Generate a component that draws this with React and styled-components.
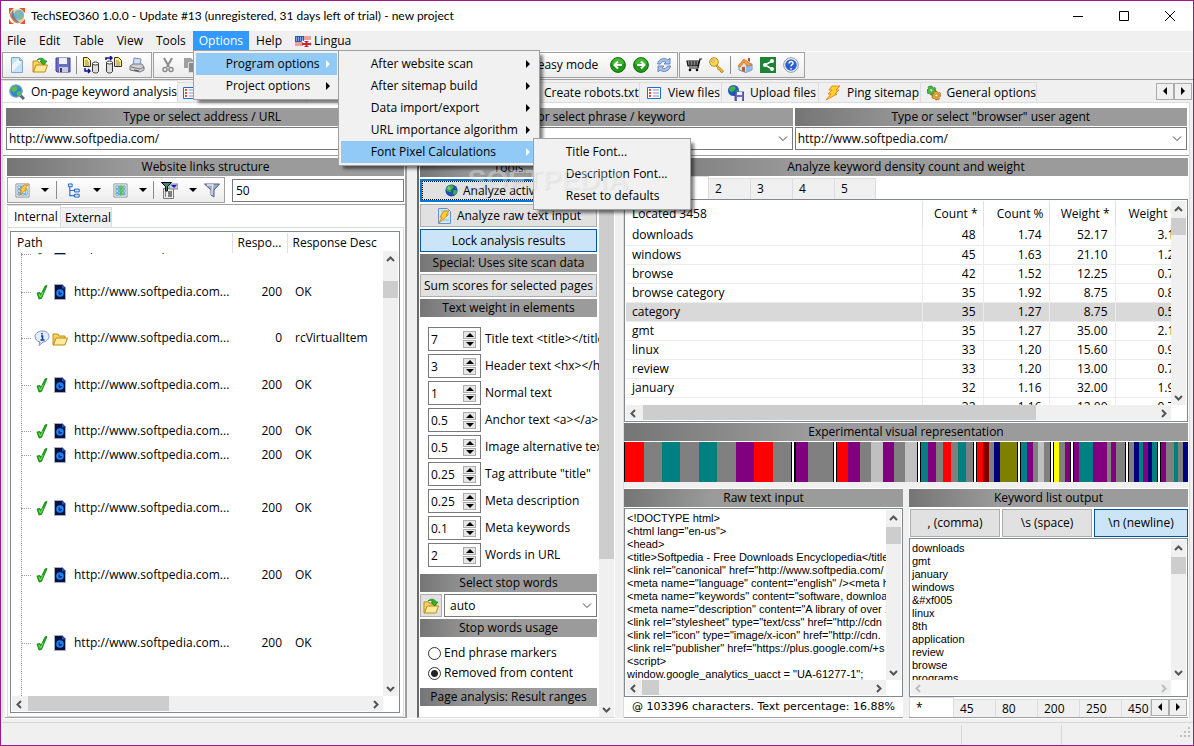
import styled, { createGlobalStyle, css } from 'styled-components'

const GlobalStyle = createGlobalStyle`
  * {
    box-sizing: border-box;
  }
  body {
    margin: 0;
    background: #f0f0f0;
    font-family: 'Open Sans', 'Noto Sans', sans-serif;
    font-size: 12px;
    line-height: 16px;
    color: #000;
  }
  button, input, select, textarea {
    font: inherit;
    color: inherit;
    margin: 0;
    border-radius: 0;
    outline: none;
  }
`

/* ---------- window ---------- */

const Window = styled.div`
  display: flex;
  flex-direction: column;
  height: 100vh;
  min-height: 620px;
  border: 1px solid #9a1a8c;
  background: #f0f0f0;
  overflow: hidden;
`

const TitleBar = styled.header`
  display: flex;
  align-items: center;
  height: 30px;
  flex: none;
  padding-left: 8px;
  background: #fff;
`

const Title = styled.h1`
  flex: 1;
  margin: 0 0 0 6px;
  font-family: Lato, 'Open Sans', sans-serif;
  font-size: 12px;
  font-weight: normal;
  white-space: nowrap;
`

const CaptionButton = styled.button`
  display: flex;
  align-items: center;
  justify-content: center;
  width: 46px;
  height: 29px;
  padding: 0;
  border: 0;
  background: transparent;
`

/* ---------- menus ---------- */

const MenuBar = styled.nav`
  display: flex;
  align-items: flex-start;
  gap: 1px;
  height: 20px;
  flex: none;
`

const MenuItem = styled.div`
  position: relative;
`

const MenuButton = styled.button`
  display: flex;
  align-items: center;
  gap: 3px;
  height: 19px;
  padding: 0 6px;
  border: 0;
  background: ${(props) => (props.$open ? '#3399ff' : 'transparent')};
  color: ${(props) => (props.$open ? '#fff' : '#000')};
`

const Popup = styled.div`
  position: absolute;
  z-index: 10;
  top: ${(props) => props.$top || '100%'};
  left: ${(props) => props.$left || '0'};
  width: ${(props) => props.$width};
  padding: 2px;
  background: #f1f1f1;
  border: 1px solid #a0a0a0;
  box-shadow: 4px 4px 3px -1px rgba(0, 0, 0, 0.5);
`

const PopupButton = styled.button`
  display: flex;
  align-items: center;
  justify-content: space-between;
  width: 100%;
  height: 22px;
  padding: 0 5px 0 30px;
  border: 0;
  white-space: nowrap;
  text-align: left;
  background: ${(props) => (props.$active ? '#91c9f7' : 'transparent')};
  svg {
    fill: ${(props) => (props.$active ? '#fff' : '#000')};
  }
`

const Watermark = styled.div`
  position: absolute;
  z-index: 11;
  top: 24px;
  left: -66px;
  font: bold 28px/34px 'Liberation Sans', Arial, sans-serif;
  color: rgba(255, 255, 255, 0.35);
  text-shadow: 1px 1px 2px rgba(0, 0, 0, 0.08);
  pointer-events: none;
`

/* ---------- toolbars ---------- */

const ToolBar = styled.div`
  display: flex;
  gap: 1px;
  flex: none;
  height: 29px;
  padding-left: 1px;
  border-top: 1px solid #fff;
  border-bottom: 1px solid #a0a0a0;
`

const ToolGroup = styled.div`
  display: flex;
  align-items: center;
  width: ${(props) => props.$width};
  height: 26px;
  padding: 0 2px;
  border: 1px solid #a0a0a0;
  background: linear-gradient(#fff, #ececec);
  white-space: nowrap;
`

const ToolButton = styled.button`
  display: flex;
  align-items: center;
  justify-content: center;
  gap: 11px;
  width: ${(props) => props.$width || '23px'};
  height: 22px;
  padding: 0;
  border: 0;
  background: transparent;
`

const ToolSeparator = styled.span`
  width: 1px;
  height: 18px;
  margin: 0 2px;
  background: #8c8c8c;
`

const Spacer = styled.span`
  flex: 1;
`

/* ---------- tabs ---------- */

const TabRow = styled.div`
  display: flex;
  align-items: flex-end;
  flex: none;
  height: ${(props) => props.$height || '22px'};
  padding-left: ${(props) => props.$pad || '0'};
`

const Tab = styled.button`
  display: flex;
  align-items: center;
  gap: 6px;
  flex: none;
  width: ${(props) => props.$width};
  height: ${(props) => (props.$active ? '100%' : 'calc(100% - 2px)')};
  padding: 0 0 0 ${(props) => props.$pad || '6px'};
  border: 1px solid #dcdcdc;
  border-left-width: ${(props) => (props.$active ? '1px' : '0')};
  border-bottom: 0;
  background: ${(props) => (props.$active ? '#fff' : '#f0f0f0')};
  overflow: hidden;
  white-space: nowrap;
`

const ArrowPair = styled.div`
  display: flex;
  align-self: center;
  margin-left: auto;
  margin-right: 1px;
`

const ArrowButton = styled.button`
  display: flex;
  align-items: center;
  justify-content: center;
  width: 18px;
  height: 17px;
  padding: 0;
  border: 1px solid #acacac;
  background: #f0f0f0;
`

/* ---------- page ---------- */

const Page = styled.main`
  display: flex;
  flex-direction: column;
  flex: 1;
  min-height: 0;
  margin: 0 3px 3px 1px;
  border: 1px solid #dcdcdc;
  border-bottom-color: #fff;
  background: #fff;
`

const AddressGrid = styled.div`
  display: grid;
  grid-template-columns: repeat(3, 1fr);
  gap: 2px;
  flex: none;
  padding: 5px 2px 5px 3px;
`

const bar = css`
  display: block;
  flex: none;
  height: 18px;
  margin: 0;
  background: linear-gradient(90deg, #757575, #9b9b9b 32%);
  font-size: 12px;
  font-weight: normal;
  line-height: 18px;
  text-align: center;
  white-space: nowrap;
  overflow: hidden;
`

const BarLabel = styled.label`
  ${bar}
  margin-bottom: 1px;
`

const BarTitle = styled.h2`
  ${bar}
`

const ChartTitle = styled(BarTitle)`
  margin: 1px 0;
`

const ComboFrame = styled.div`
  display: flex;
  align-items: center;
  flex: 1;
  height: 23px;
  padding-right: 4px;
  border: 1px solid #7a7a7a;
  background: #fff;
`

const ComboSelect = styled.select`
  flex: 1;
  min-width: 0;
  height: 21px;
  padding: 0 ${(props) => props.$pad || '2px'};
  border: 0;
  appearance: none;
  background: transparent;
`

const Panels = styled.div`
  display: grid;
  grid-template-columns: 402px 200px 1fr;
  column-gap: 8px;
  flex: 1;
  min-height: 0;
  padding-left: 2px;
  background: #f0f0f0;
  border-top: 1px solid #a0a0a0;
`

const Panel = styled.section`
  display: flex;
  flex-direction: column;
  min-width: 0;
  min-height: 0;
  padding-top: 2px;
  background: #fff;
`

const LeftPanel = styled(Panel)`
  border-right: 2px solid #a0a0a0;
  border-bottom: 1px solid #a0a0a0;
  padding-left: 2px;
  > h2 {
    margin-right: 1px;
  }
`

const FilterRow = styled.div`
  display: flex;
  align-items: center;
  gap: 7px;
  height: 29px;
  flex: none;
  border-bottom: 1px solid #a0a0a0;
`

const FilterInput = styled.input`
  flex: 1;
  min-width: 0;
  height: 23px;
  margin-right: 1px;
  padding: 0 3px;
  border: 1px solid #7a7a7a;
`

const TabPage = styled.div`
  display: flex;
  flex: 1;
  min-height: 0;
  margin-right: 1px;
  padding: 3px 3px 3px 2px;
  border: 1px solid #dcdcdc;
`

/* ---------- lists ---------- */

const ListFrame = styled.div`
  display: grid;
  grid-template-columns: minmax(0, 1fr) 15px;
  grid-template-rows: minmax(0, 1fr) 15px;
  flex: ${(props) => props.$flex || '1'};
  min-width: 0;
  min-height: 0;
  padding: 1px;
  border: 1px solid #828790;
  background: #fff;
`

const Viewport = styled.div`
  min-width: 0;
  overflow: hidden;
`

const LinkTable = styled.table`
  width: 384px;
  height: 100%;
  table-layout: fixed;
  border-collapse: collapse;
  background: repeating-linear-gradient(#9a9a9a 0 1px, transparent 1px 2px) 9px 20px / 1px 100% no-repeat;
  th {
    height: 20px;
    padding: 0 5px;
    border-right: 1px solid #e0e0e0;
    background: #fff;
    font-weight: normal;
    text-align: left;
    white-space: nowrap;
  }
  td {
    padding: 0 5px;
    vertical-align: bottom;
    white-space: nowrap;
  }
  td:nth-child(1) {
    padding: 0 0 0 9px;
  }
  td:nth-child(2) {
    text-align: right;
  }
  td:nth-child(3) {
    padding-left: 8px;
  }
`

const LinkRow = styled.tr`
  height: ${(props) => props.$height}px;
`

const PathCell = styled.div`
  display: flex;
  align-items: ${(props) => (props.$clip ? 'flex-end' : 'center')};
  height: ${(props) => (props.$clip ? '2px' : '18px')};
  overflow: hidden;
  &::before {
    content: '';
    flex: none;
    width: 10px;
    margin-right: 3px;
    border-top: 1px dotted #9a9a9a;
  }
  svg {
    flex: none;
    margin-right: 2px;
  }
  span {
    margin-left: 4px;
  }
`

const CellText = styled.div`
  height: 18px;
  line-height: 18px;
`

const KeywordTable = styled.table`
  width: 100%;
  min-width: 544px;
  table-layout: fixed;
  border-collapse: collapse;
  th {
    height: 25px;
    padding: 0 5px;
    border-right: 1px solid #e0e0e0;
    font-weight: normal;
    text-align: right;
    white-space: nowrap;
  }
  td {
    height: 19px;
    padding: 0 7px;
    border: 1px solid #ececec;
    border-width: 0 1px 1px 0;
    line-height: 18px;
    text-align: right;
  }
  th:first-child, td:first-child {
    padding-left: 6px;
    text-align: left;
  }
  th:last-child, td:last-child {
    overflow: hidden;
    padding: 0 0 0 13px;
    border-right: 0;
    white-space: nowrap;
    text-align: left;
  }
  td:last-child {
    padding-left: 42px;
  }
`

const KeywordRow = styled.tr`
  background: ${(props) => (props.$selected ? '#d9d9d9' : '#fff')};
`

const ScrollTrack = styled.div`
  display: flex;
  flex-direction: ${(props) => (props.$vertical ? 'column' : 'row')};
  min-width: 0;
  min-height: 0;
  margin-top: ${(props) => props.$top || '0'};
  background: #f0f0f0;
`

const ScrollButton = styled.button`
  display: flex;
  align-items: center;
  justify-content: center;
  flex: none;
  width: 15px;
  height: 16px;
  padding: 0;
  border: 0;
  background: transparent;
`

const ScrollThumb = styled.div`
  flex: 0 0 ${(props) => props.$size};
  margin: ${(props) => (props.$vertical ? `${props.$offset} 0 0` : `0 0 0 ${props.$offset}`)};
  background: #cdcdcd;
`

/* ---------- tools column ---------- */

const ToolsPanel = styled(Panel)`
  flex-direction: row;
  margin-left: 2px;
  padding: 0 1px 0 0;
  border-left: 2px solid #696969;
  border-bottom: 1px solid #dcdcdc;
`

const ToolsBody = styled.div`
  display: flex;
  flex-direction: column;
  gap: 2px;
  flex: 1;
  min-width: 0;
  padding: 3px 2px 0 1px;
  overflow: hidden;
`

const ActionButton = styled.button`
  display: flex;
  align-items: center;
  justify-content: center;
  gap: 5px;
  flex: none;
  width: ${(props) => props.$width || 'auto'};
  height: ${(props) => props.$height || '23px'};
  padding: 0;
  border: 1px solid ${(props) => (props.$pressed ? '#00559b' : '#adadad')};
  background: ${(props) => (props.$pressed ? '#cce4f7' : '#e1e1e1')};
  white-space: nowrap;
  overflow: hidden;
  ${(props) =>
    props.$focused &&
    css`
      border: 2px solid #0078d7;
      outline: 1px dotted #000;
      outline-offset: -3px;
    `}
`

const WeightList = styled.div`
  display: flex;
  flex-direction: column;
  gap: 3px;
  padding: 8px 0 5px 8px;
`

const WeightRow = styled.div`
  display: flex;
  align-items: center;
  gap: 4px;
  label {
    white-space: nowrap;
  }
`

const SpinBox = styled.div`
  display: flex;
  align-items: center;
  flex: none;
  width: 53px;
  height: 24px;
  padding-right: 3px;
  border: 1px solid #7a7a7a;
  input {
    width: 34px;
    height: 22px;
    padding: 0 2px;
    border: 0;
    background: transparent;
  }
`

const SpinArrows = styled.div`
  display: flex;
  flex-direction: column;
  gap: 1px;
  button {
    display: flex;
    align-items: center;
    justify-content: center;
    width: 13px;
    height: 8px;
    padding: 0;
    border: 1px solid #acacac;
    background: #e6e6e6;
  }
`

const StopWordRow = styled.div`
  display: flex;
  align-items: center;
  gap: 2px;
`

const RadioList = styled.div`
  display: flex;
  flex-direction: column;
  gap: 4px;
  padding: 6px 0 5px 8px;
`

const RadioLabel = styled.label`
  display: flex;
  align-items: center;
  gap: 3px;
  white-space: nowrap;
  input {
    appearance: none;
    width: 13px;
    height: 13px;
    border: 1px solid #333;
    border-radius: 50%;
  }
  input:checked {
    background: radial-gradient(circle, #222 0 3px, #fff 4px);
  }
`

/* ---------- right column ---------- */

const RightPanel = styled(Panel)`
  padding-right: 1px;
  border-left: 1px solid #dcdcdc;
`

const StripChart = styled.svg`
  display: block;
  flex: none;
  width: 100%;
  height: 40px;
`

const BottomGrid = styled.div`
  display: grid;
  grid-template-columns: 1fr 1fr;
  gap: 6px;
  flex: 234 1 0;
  min-height: 0;
  padding-top: 6px;
  background: #f0f0f0;
`

const BottomColumn = styled.div`
  display: flex;
  flex-direction: column;
  min-width: 0;
  min-height: 0;
  padding-top: 1px;
  border-bottom: 1px solid #a0a0a0;
  background: #fff;
`

const TextBox = styled.textarea`
  width: 100%;
  height: 100%;
  padding: 2px 1px 0;
  border: 0;
  resize: none;
  overflow: hidden;
  white-space: pre;
  font-family: 'Liberation Sans', Arial, sans-serif;
  font-size: 11px;
  line-height: 13px;
`

const Summary = styled.p`
  flex: none;
  height: 20px;
  margin: 0;
  padding-left: 8px;
  font-family: 'DejaVu Sans', Tahoma, sans-serif;
  font-size: 11px;
  line-height: 20px;
  white-space: nowrap;
  overflow: hidden;
`

const DelimiterRow = styled.div`
  display: grid;
  grid-template-columns: 90px 90px 1fr;
  gap: 2px;
  flex: none;
  padding: 2px 0 1px 1px;
`

const StatusBar = styled.footer`
  display: flex;
  justify-content: flex-end;
  align-items: flex-end;
  height: 23px;
  flex: none;
  border-top: 1px solid #d7d7d7;
`

const StatusCell = styled.div`
  width: ${(props) => props.$width};
  height: 20px;
  border-left: 1px solid #d7d7d7;
  text-align: right;
`

/* ---------- icons ---------- */

const Icon = ({ children, size = 16 }) => (
  <svg width={size} height={size} viewBox='0 0 16 16' aria-hidden='true'>
    {children}
  </svg>
)

const AppIcon = () => (
  <Icon>
    <path d='M0 0h5L2 3 0 6zM16 0v5l-3-3-3-2zM0 16v-5l2 3 3 2zM16 16h-5l5-5z' fill='#e8532b' />
    <path d='M2 2l10-1 3 4v7l-4 3H5L1 9z' fill='#f3c9a8' />
    <circle cx='10' cy='7' r='5' fill='#6fb4d8' />
    <path d='M7 4l3-1 1 3-2 2zM11 8l3-1-1 4-3 1z' fill='#8fbf6a' />
    <path d='M4 2C0 6 3 15 12 15c-4-2-7-5-8-13z' fill='#5a86a0' />
    <path d='M1 5c1 4 3 8 8 10' stroke='#e07040' fill='none' strokeWidth='1.200' />
  </Icon>
)

const FlagIcon = () => (
  <Icon>
    <path d='M0 3h16v10H0z' fill='#fff' />
    <path d='M0 3h9v6H0z' fill='#2f56b0' />
    <path d='M9 4h7M9 6h7M0 10h8M0 12h8' stroke='#e03a3a' />
    <path d='M7 8h9v6H7z' fill='#3558b5' />
    <path d='M7 8l9 6M16 8l-9 6' stroke='#fff' strokeWidth='2' />
    <path d='M11.500 8v6M7 11h9' stroke='#e02020' strokeWidth='2' />
    <path d='M1 5h7M1 7h7' stroke='#dfe8ff' strokeDasharray='1 1' />
  </Icon>
)

const NewIcon = () => (
  <Icon>
    <path d='M2.500 .5h8l3 3v12h-11z' fill='#c4e2f8' stroke='#7fa6c8' />
    <path d='M3 15V8l7-7 1 3 2 .5z' fill='#fff' opacity='.7' />
    <path d='M10.500 .5v3h3' fill='#a9cbe6' stroke='#7fa6c8' />
  </Icon>
)

const FolderIcon = ({ arrow }) => (
  <Icon>
    <path d='M1 4h5l1 2h6v3H5l-3 6H1z' fill='#f6d461' stroke='#b98d1c' />
    <path d='M4 8h11.500l-2.500 7H1.500z' fill='#ffe99a' stroke='#b98d1c' />
    {arrow && <path d='M5 3c3-3 7-2 8 1h2l-3.500 4L8 4h2c-1-2-3-2-5-1z' fill='#35b427' stroke='#17740e' strokeWidth='.7' />}
  </Icon>
)

const SaveIcon = () => (
  <Icon>
    <path d='M1 1h14v14H2l-1-1z' fill='#6a6dc4' stroke='#40438f' />
    <path d='M4 1h8v6H4z' fill='#eef0fb' />
    <path d='M4 10h9v5H4z' fill='#c9cbe0' />
    <path d='M5 11h2v4H5z' fill='#34377f' />
  </Icon>
)

const DatabaseIcon = ({ flip }) => (
  <svg width='18' height='18' viewBox='0 0 18 18' aria-hidden='true'>
    {flip ? (
      <>
        <path d='M1.500 6.500h6v9c-1 2-5 2-6 0z' fill='#ddd' stroke='#333' />
        <ellipse cx='4.500' cy='6.500' rx='3' ry='1.500' fill='#fff' stroke='#333' />
        <path d='M9.500 1.500h4l3 3v6h-7z' fill='#fff36b' stroke='#333' />
        <path d='M11 5h3M11 7h4M11 9h4' stroke='#888' />
        <path d='M1 4V2h6M5 0l2 2-2 2' stroke='#11118c' strokeWidth='1.500' fill='none' />
      </>
    ) : (
      <>
        <path d='M1.500 1.500h4l3 3v6h-7z' fill='#fff36b' stroke='#333' />
        <path d='M3 5h3M3 7h4M3 9h4' stroke='#888' />
        <path d='M10.500 7.500h6v8c-1 2-5 2-6 0z' fill='#ddd' stroke='#333' />
        <ellipse cx='13.500' cy='7.500' rx='3' ry='1.500' fill='#fff' stroke='#333' />
        <path d='M3 12v3h5M6 13l2 2-2 2' stroke='#11118c' strokeWidth='1.500' fill='none' />
      </>
    )}
  </svg>
)

const PrinterIcon = () => (
  <Icon>
    <path d='M5 1l7 1-1 7H4z' fill='#cfe0fa' stroke='#7c8fb8' />
    <path d='M1 9l3-2h9l2 3v3l-4 2-10-2z' fill='#d0d0d4' stroke='#77777f' />
    <path d='M2 10l9 2 4-2' stroke='#77777f' fill='none' />
    <path d='M5 13l5 1' stroke='#444' />
  </Icon>
)

const CutIcon = () => (
  <Icon>
    <path d='M4 1l5 9M12 1L7 10' stroke='#8b8b8b' strokeWidth='2' />
    <circle cx='5' cy='12.500' r='2' fill='none' stroke='#8b8b8b' strokeWidth='1.500' />
    <circle cx='11' cy='12.500' r='2' fill='none' stroke='#8b8b8b' strokeWidth='1.500' />
  </Icon>
)

const CopyIcon = () => (
  <Icon>
    <path d='M1 1h7l2 2v8H1z' fill='#a0a0a0' />
    <path d='M5.500 5.500h7l2 2v8h-9z' fill='#8b8b8b' stroke='#ddd' />
  </Icon>
)

const RoundArrowIcon = ({ back }) => (
  <Icon>
    <circle cx='8' cy='8' r='7.400' fill='#1f9a14' stroke='#0e6a08' />
    <path d='M2 7a6 6 0 0 1 12 0z' fill='#5cc94b' opacity='.6' />
    <path
      d='M4 8h7M8 4.500L11.500 8 8 11.500'
      transform={back ? 'translate(16 0) scale(-1 1)' : undefined}
      stroke='#fff'
      strokeWidth='2'
      fill='none'
    />
  </Icon>
)

const RefreshIcon = () => (
  <Icon>
    <path d='M1.500 7a6.500 6.500 0 0 1 10.500-4l2-2v6H8l2-2a3.500 3.500 0 0 0-5.500 2z' fill='#a9c5ef' stroke='#4a72b5' strokeWidth='.8' />
    <path d='M14.500 9A6.500 6.500 0 0 1 4 13l-2 2V9h6l-2 2a3.500 3.500 0 0 0 5.500-2z' fill='#a9c5ef' stroke='#4a72b5' strokeWidth='.8' />
  </Icon>
)

const CartIcon = () => (
  <Icon>
    <path d='M16 2h-2l-2 9H3M13 4H1l1 5h10z' fill='#fff' stroke='#111' strokeWidth='1.200' />
    <path d='M1 6h12M2 8h10M4 4v5M7 4v5M10 4v5' stroke='#111' />
    <circle cx='4' cy='13' r='1.300' />
    <circle cx='11' cy='13' r='1.300' />
  </Icon>
)

const KeyIcon = () => (
  <Icon>
    <path d='M7 7l7.500 7-1 1.500-2-.5-.5-2-2-.5-.5-2-2-2z' fill='#f7c52e' stroke='#a8740c' strokeWidth='.8' />
    <circle cx='5' cy='5' r='4.300' fill='#ffd84d' stroke='#a8740c' strokeWidth='.8' />
    <circle cx='4' cy='4' r='1.300' fill='#fff' stroke='#a8740c' strokeWidth='.6' />
  </Icon>
)

const HomeIcon = () => (
  <Icon>
    <path d='M2 8l4-3 9 2v6l-6 2.500L2 13z' fill='#cfe3fb' stroke='#6a92c8' />
    <path d='M9 8l6-1v6l-6 2.500z' fill='#8fb8ec' />
    <path d='M1 9l6-7 8 6-5 1-3-4-4 5z' fill='#f5a040' stroke='#c76a14' strokeWidth='.7' />
    <path d='M5 10h3v5l-3-1z' fill='#b5622a' />
    <path d='M11 1h2v4l-2-1z' fill='#c44' />
  </Icon>
)

const ShareIcon = () => (
  <Icon>
    <path d='M0 0h16v16H0z' fill='#1d8436' />
    <path d='M12 4L5 8l7 4' stroke='#fff' strokeWidth='1.500' fill='none' />
    <circle cx='12' cy='4' r='2' fill='#fff' />
    <circle cx='5' cy='8' r='2' fill='#fff' />
    <circle cx='12' cy='12' r='2' fill='#fff' />
  </Icon>
)

const HelpIcon = () => (
  <Icon>
    <circle cx='8' cy='8' r='7.300' fill='#fff' stroke='#8a93a8' />
    <circle cx='8' cy='8' r='5.800' fill='#2b62d0' />
    <path d='M6 6.500c0-3 4.500-2.500 4 0-.3 1-2 1.300-2 2.800M8 11v1.500' stroke='#fff' strokeWidth='1.500' fill='none' />
  </Icon>
)

const GlobeIcon = ({ size = 13 }) => (
  <Icon size={size}>
    <circle cx='8' cy='8' r='7.500' fill='#1f4fb0' />
    <path d='M4 2l5-1 2 3-3 3-1 3-4-1-2-3zM10 8l4-1 1 3-3 4-2-2z' fill='#35b044' />
    <circle cx='5' cy='5' r='2' fill='#fff' opacity='.35' />
  </Icon>
)

const SearchGlobeIcon = () => (
  <Icon>
    <path d='M10 10l5 5' stroke='#55697a' strokeWidth='3' />
    <circle cx='7' cy='7' r='6.300' fill='#2e8ad0' stroke='#8aa7bd' strokeWidth='1.200' />
    <path d='M3 3l4-1 2 2-2 3-3 1-2-2zM8 8l3-1 1 2-2 3-2-1z' fill='#5cc043' />
  </Icon>
)

const ListIcon = () => (
  <Icon>
    <path d='M1.500 2.500h13v11h-13z' fill='#fff' stroke='#1c6fd0' />
    <path d='M3 5h2M3 8h2M3 11h2' stroke='#e0562b' strokeWidth='2' />
    <path d='M7 5h6M7 8h6M7 11h6' stroke='#7d93b3' />
  </Icon>
)

const UploadIcon = () => (
  <Icon>
    <circle cx='5.500' cy='5.500' r='5.500' fill='#2458b8' />
    <path d='M2 2l4-1 2 2-2 3-3 1-2-2zM7 6l3-1v3l-3 2z' fill='#3cb54a' />
    <path d='M7 7h9v9H7z' fill='#6a6fb8' stroke='#33376f' strokeWidth='.8' />
    <path d='M9 7h5v3H9zM9 12h5v4H9z' fill='#eef' />
  </Icon>
)

const BoltIcon = () => (
  <Icon>
    <path d='M7 1h8l-4 4h3l-4 4h2L1 15l5-6H3l4-4H4z' fill='#ffd32a' stroke='#ef7d12' strokeWidth='.9' />
  </Icon>
)

const gearTeeth =
  'M-1-5h2l.4 1.400 1.200.5 1.300-.7 1.300 1.300-.7 1.300.5 1.200L5-1v2l-1.400.4-.5 1.200.7 1.300-1.300 1.300-1.300-.7-1.200.5L1 5h-2l-.4-1.400-1.200-.5-1.300.7-1.300-1.300.7-1.300-.5-1.200L-5 1v-2l1.400-.4.5-1.200-.7-1.300 1.300-1.300 1.300.7 1.200-.5z'

const GearsIcon = () => (
  <Icon>
    <path d={gearTeeth} transform='translate(5 5)' fill='#4db848' stroke='#277a25' strokeWidth='.8' />
    <circle cx='5' cy='5' r='1.300' fill='#d8f2d4' />
    <path d={gearTeeth} transform='translate(11 11)' fill='#e2a634' stroke='#9c6a14' strokeWidth='.8' />
    <circle cx='11' cy='11' r='1.500' fill='#fff' stroke='#9c6a14' strokeWidth='.6' />
  </Icon>
)

const GridBoltIcon = () => (
  <Icon size={15}>
    <path d='M1 1h14v14H1z' fill='#fff' stroke='#8a8a8a' />
    <path d='M3 3h3v3H3zM7 3h3v3H7zM3 7h3v3H3zM3 11h3v2H3zM7 11h3v2H7zM11 7h2v6h-2z' fill='#d4ebfc' stroke='#3f8fd8' strokeWidth='.8' />
    <path d='M10 2h4l-3 4h2l-8 7 2-5H5z' fill='#ffcf33' stroke='#df7612' strokeWidth='.8' />
  </Icon>
)

const TreeIcon = () => (
  <Icon size={15}>
    <path d='M3 4v9.500h5M3 8h5' stroke='#2b6fd0' strokeWidth='1.200' fill='none' />
    <path d='M1.500 1h4v3h-4zM8 6.500h5v3H8zM8 12h5v3H8z' fill='#d4ebfc' stroke='#1b62c8' />
  </Icon>
)

const ColumnsIcon = () => (
  <Icon size={15}>
    <path d='M1 1h14v14H1z' fill='#fff' stroke='#8a8a8a' />
    <path d='M3 3h3v3H3zM3 7h3v3H3zM3 11h3v2H3zM11 3h2v3h-2zM11 7h2v3h-2zM11 11h2v2h-2z' fill='#c4e4fb' stroke='#3f8fd8' strokeWidth='.8' />
    <path d='M7 3h3v3H7zM7 7h3v3H7zM7 11h3v2H7z' fill='#5fd65c' stroke='#259223' strokeWidth='.6' />
  </Icon>
)

const FilterListIcon = () => (
  <svg width='17' height='17' viewBox='0 0 17 17' aria-hidden='true'>
    <path d='M2.500 6.500h10v10h-10z' fill='#eee' stroke='#777' />
    <path d='M4 10h1M7 10h4M4 12h1M7 12h4M4 14h1M7 14h4' stroke='#111' />
    <path d='M8 2h9v5H8z' fill='#ccc' stroke='#888' />
    <path d='M10 3h6l-3 3z' fill='#11f' />
    <path d='M.5 .5h10l-4 4V9h-2V4.500z' fill='#3a8484' stroke='#000' />
  </svg>
)

const FunnelIcon = () => (
  <Icon>
    <path d='M.5 2h15L10 8v7l-3-2V8z' fill='#9aa7c4' stroke='#56627f' />
    <path d='M3 3h6l-1 5v5' stroke='#e6ebf7' fill='none' strokeWidth='1.300' />
  </Icon>
)

const CheckIcon = () => (
  <Icon>
    <path d='M3 9l3-.5 1 2L11 2l2-.5-1 2.500-4.500 10.500-2.500.5z' fill='#24b51c' stroke='#0d7d0a' strokeWidth='.8' />
    <path d='M5 10l1.500 3L9 8' stroke='#8fea7c' fill='none' strokeWidth='.8' />
  </Icon>
)

const PageIcon = () => (
  <Icon>
    <path d='M2.500 .5h8l3 3v12h-11z' fill='#05113f' stroke='#a7adc2' />
    <path d='M10 .5v4h4z' fill='#1c55c2' />
    <circle cx='8' cy='9' r='3.800' fill='#1c83f2' />
    <path d='M6.500 7.500H8V9h2.500L8 11.500 6.500 10z' fill='#0a2f8a' />
  </Icon>
)

const InfoIcon = () => (
  <Icon>
    <path d='M8 1c5 0 7 3 7 5.500S12 12 9 12l-4 3.500L6 12C3 11.500 1 9 1 6.500S4 1 8 1z' fill='#e3eefb' stroke='#7b93b5' />
    <path d='M8 3v1.500M7 6h1.500v4M6.500 10h4' stroke='#143c9a' strokeWidth='1.600' fill='none' />
  </Icon>
)

const DocBoltIcon = () => (
  <Icon>
    <path d='M2.500 .5h9l3 3v12h-12z' fill='#cfe6fa' stroke='#6c93bd' />
    <path d='M5 3h6M5 6h8M5 12h8' stroke='#94b6d8' />
    <path d='M8 3h5l-3 4h2l-9 8 3-6H4z' fill='#ffd32a' stroke='#e08512' strokeWidth='.9' />
  </Icon>
)

const turns = { up: 0, right: 90, down: 180, left: 270 }

const Chevron = ({ dir, muted }) => (
  <svg width='9' height='9' viewBox='0 0 9 9' aria-hidden='true'>
    <path
      d='M1 6l3.500-3.500L8 6'
      transform={`rotate(${turns[dir]} 4.500 4.500)`}
      stroke={muted ? '#bdbdbd' : '#555'}
      strokeWidth='2'
      fill='none'
    />
  </svg>
)

const ComboChevron = () => (
  <svg width='10' height='6' viewBox='0 0 10 6' aria-hidden='true'>
    <path d='M1 .5l4 4 4-4' stroke='#444' fill='none' />
  </svg>
)

const Caret = ({ dir }) => (
  <svg width='8' height='8' viewBox='0 0 8 8' aria-hidden='true'>
    <path d='M0 6l4-4 4 4z' transform={`rotate(${turns[dir]} 4 4)`} />
  </svg>
)

/* ---------- data ---------- */

const links = [
  { height: 46, code: 200, desc: 'OK' },
  { height: 46, code: 0, desc: 'rcVirtualItem', folder: true },
  { height: 47, code: 200, desc: 'OK' },
  { height: 46, code: 200, desc: 'OK' },
  { height: 24, code: 200, desc: 'OK' },
  { height: 53, code: 200, desc: 'OK' },
  { height: 67, code: 200, desc: 'OK' },
  { height: 68, code: 200, desc: 'OK' },
]

const keywords = [
  ['downloads', '48', '1.74', '52.17', '3.17'],
  ['windows', '45', '1.63', '21.10', '1.28'],
  ['browse', '42', '1.52', '12.25', '0.74'],
  ['browse category', '35', '1.92', '8.75', '0.86'],
  ['category', '35', '1.27', '8.75', '0.53'],
  ['gmt', '35', '1.27', '35.00', '2.13'],
  ['linux', '33', '1.20', '15.60', '0.95'],
  ['review', '33', '1.20', '13.00', '0.79'],
  ['january', '32', '1.16', '32.00', '1.94'],
  ['', '32', '1.16', '12.00', '0.73'],
]

const weights = [
  ['7', 'Title text <title></title>'],
  ['3', 'Header text <hx></hx>'],
  ['1', 'Normal text'],
  ['0.5', 'Anchor text <a></a>'],
  ['0.5', 'Image alternative text'],
  ['0.25', 'Tag attribute "title"'],
  ['0.25', 'Meta description'],
  ['0.1', 'Meta keywords'],
  ['2', 'Words in URL'],
]

const rawText = `<!DOCTYPE html>
<html lang="en-us">
<head>
<title>Softpedia - Free Downloads Encyclopedia</title>
<link rel="canonical" href="http://www.softpedia.com/
<meta name="language" content="english" /><meta h
<meta name="keywords" content="software, downloa
<meta name="description" content="A library of over 1
<link rel="stylesheet" type="text/css" href="http://cdn
<link rel="icon" type="image/x-icon" href="http://cdn.
<link rel="publisher" href="https://plus.google.com/+s
<script>
window.google_analytics_uacct = "UA-61277-1";`

const keywordText = `downloads
gmt
january
windows
&#xf005
linux
8th
application
review
browse
programs`

const colors = {
  k: '#000',
  w: '#fff',
  r: '#f00',
  g: '#808080',
  t: '#008080',
  p: '#800080',
  s: '#c0c0c0',
  m: '#800000',
  n: '#000080',
  o: '#808000',
  y: '#ff0',
}

// colour key followed by the segment width
const strips = (
  'k3 r52 g49 t49 g52 t49 g52 p49 r52 g49 k3 w5 k6 p33 g68 k3 w5 k3 r30 p33 g30 s32 p30 g31 s32 ' +
  'k3 w5 k3 t19 p22 g19 r22 g19 t22 g19 k3 w5 k3 r17 m16 g14 n16 o46 k3 w5 k3 t17 p16 g14 s16 g17 ' +
  'k3 w5 k3 y13 g17 p13 k3 w5 k3 p14 t38 p38 g11 p14 g24 k3 w5 k3 g14 n14 t11 p13 n11 t14 k3 w5 k3 ' +
  'p14 g21 t11 g14 n14'
)
  .split(' ')
  .reduce((list, item) => {
    const last = list[list.length - 1]
    const x = last ? last.x + last.width : 0
    return [...list, { x, width: Number(item.slice(1)), fill: colors[item[0]] }]
  }, [])

/* ---------- parts ---------- */

const ScrollBar = ({ vertical, offset, size, muted, top }) => (
  <ScrollTrack $vertical={vertical} $top={top}>
    <ScrollButton aria-label={vertical ? 'Scroll up' : 'Scroll left'}>
      <Chevron dir={vertical ? 'up' : 'left'} muted={muted} />
    </ScrollButton>
    {size && <ScrollThumb $vertical={vertical} $offset={offset} $size={size} />}
    <Spacer />
    <ScrollButton aria-label={vertical ? 'Scroll down' : 'Scroll right'}>
      <Chevron dir={vertical ? 'down' : 'right'} muted={muted} />
    </ScrollButton>
  </ScrollTrack>
)

const AddressField = ({ id, label, value }) => (
  <div>
    <BarLabel htmlFor={id}>{label}</BarLabel>
    <ComboFrame>
      <ComboSelect id={id}>
        <option>{value}</option>
      </ComboSelect>
      <ComboChevron />
    </ComboFrame>
  </div>
)

const TabArrows = () => (
  <ArrowPair>
    <ArrowButton aria-label='Previous tabs'>
      <Caret dir='left' />
    </ArrowButton>
    <ArrowButton aria-label='Next tabs'>
      <Caret dir='right' />
    </ArrowButton>
  </ArrowPair>
)

const PopupItem = ({ label, arrow, active }) => (
  <PopupButton $active={active}>
    {label}
    {arrow && <Caret dir='right' />}
  </PopupButton>
)

const OptionsMenu = () => (
  <Popup $width='147px'>
    <PopupItem label='Program options' arrow active />
    <PopupItem label='Project options' arrow />
    <Popup $width='202px' $top='-1px' $left='144px'>
      <PopupItem label='After website scan' arrow />
      <PopupItem label='After sitemap build' arrow />
      <PopupItem label='Data import/export' arrow />
      <PopupItem label='URL importance algorithm' arrow />
      <PopupItem label='Font Pixel Calculations' arrow active />
      <Popup $width='158px' $top='87px' $left='194px'>
        <PopupItem label='Title Font...' />
        <PopupItem label='Description Font...' />
        <PopupItem label='Reset to defaults' />
        <Watermark>SOFTPEDIA</Watermark>
      </Popup>
    </Popup>
  </Popup>
)

const LinkPath = ({ folder, clip }) => (
  <PathCell $clip={clip}>
    {folder ? <InfoIcon /> : <CheckIcon />}
    {folder ? <FolderIcon /> : <PageIcon />}
    <span>http://www.softpedia.com...</span>
  </PathCell>
)

const LinksPanel = () => (
  <LeftPanel>
    <BarTitle>Website links structure</BarTitle>
    <FilterRow>
      <ToolGroup $width='218px'>
        <ToolButton $width='44px' aria-label='Quick report'>
          <GridBoltIcon />
          <Caret dir='down' />
        </ToolButton>
        <ToolSeparator />
        <ToolButton $width='50px' aria-label='Tree view'>
          <TreeIcon />
          <Caret dir='down' />
        </ToolButton>
        <ToolButton $width='42px' aria-label='Columns'>
          <ColumnsIcon />
          <Caret dir='down' />
        </ToolButton>
        <ToolSeparator />
        <ToolButton $width='46px' aria-label='Filter options'>
          <FilterListIcon />
          <Caret dir='down' />
        </ToolButton>
        <ToolButton $width='20px' aria-label='Filter'>
          <FunnelIcon />
        </ToolButton>
      </ToolGroup>
      <FilterInput aria-label='Filter text' defaultValue='50' />
    </FilterRow>
    <TabRow>
      <Tab $active $width='54px'>Internal</Tab>
      <Tab $width='51px' $pad='4px'>External</Tab>
    </TabRow>
    <TabPage>
      <ListFrame>
        <Viewport>
          <LinkTable>
            <colgroup>
              <col width='220' />
              <col width='55' />
              <col width='109' />
            </colgroup>
            <thead>
              <tr>
                <th>Path</th>
                <th>Respo...</th>
                <th>Response Desc</th>
              </tr>
            </thead>
            <tbody>
              <LinkRow $height={2}>
                <td>
                  <LinkPath clip />
                </td>
                <td />
                <td />
              </LinkRow>
              {links.map((link, i) => (
                <LinkRow key={i} $height={link.height}>
                  <td>
                    <LinkPath folder={link.folder} />
                  </td>
                  <td>
                    <CellText>{link.code}</CellText>
                  </td>
                  <td>
                    <CellText>{link.desc}</CellText>
                  </td>
                </LinkRow>
              ))}
              <tr>
                <td colSpan={3} />
              </tr>
            </tbody>
          </LinkTable>
        </Viewport>
        <ScrollBar vertical offset='14px' size='17px' top='18px' />
        <ScrollBar offset='1px' size='141px' />
      </ListFrame>
    </TabPage>
  </LeftPanel>
)

const ToolsColumn = () => (
  <ToolsPanel>
    <ToolsBody>
      <BarTitle>Tools</BarTitle>
      <ActionButton $focused>
        <GlobeIcon />
        Analyze active page
      </ActionButton>
      <ActionButton>
        <DocBoltIcon />
        Analyze raw text input
      </ActionButton>
      <ActionButton $pressed>Lock analysis results</ActionButton>
      <BarTitle>Special: Uses site scan data</BarTitle>
      <ActionButton>Sum scores for selected pages</ActionButton>
      <BarTitle>Text weight in elements</BarTitle>
      <WeightList>
        {weights.map(([value, label], i) => (
          <WeightRow key={label}>
            <SpinBox>
              <input id={`weight-${i}`} defaultValue={value} />
              <SpinArrows>
                <button aria-label='Increase'>
                  <Caret dir='up' />
                </button>
                <button aria-label='Decrease'>
                  <Caret dir='down' />
                </button>
              </SpinArrows>
            </SpinBox>
            <label htmlFor={`weight-${i}`}>{label}</label>
          </WeightRow>
        ))}
      </WeightList>
      <BarTitle as='label' htmlFor='stop-words'>Select stop words</BarTitle>
      <StopWordRow>
        <ActionButton $width='22px' aria-label='Open stop words'>
          <FolderIcon arrow />
        </ActionButton>
        <ComboFrame>
          <ComboSelect id='stop-words' $pad='5px'>
            <option>auto</option>
          </ComboSelect>
          <ComboChevron />
        </ComboFrame>
      </StopWordRow>
      <BarTitle>Stop words usage</BarTitle>
      <RadioList>
        <RadioLabel>
          <input type='radio' name='usage' />
          End phrase markers
        </RadioLabel>
        <RadioLabel>
          <input type='radio' name='usage' defaultChecked />
          Removed from content
        </RadioLabel>
      </RadioList>
      <BarTitle>Page analysis: Result ranges</BarTitle>
    </ToolsBody>
    <ScrollTrack $vertical>
      <ScrollThumb $vertical $offset='0' $size='403px' />
      <Spacer />
      <ScrollButton aria-label='Scroll down'>
        <Chevron dir='down' />
      </ScrollButton>
    </ScrollTrack>
  </ToolsPanel>
)

const KeywordPanel = () => (
  <RightPanel>
    <BarTitle>Analyze keyword density count and weight</BarTitle>
    <TabRow $height='23px'>
      <Tab $active $width='85px' $pad='8px'>1</Tab>
      <Tab $width='42px'>2</Tab>
      <Tab $width='42px'>3</Tab>
      <Tab $width='42px'>4</Tab>
      <Tab $width='41px'>5</Tab>
    </TabRow>
    <ListFrame $flex='223 1 0'>
      <Viewport>
        <KeywordTable>
          <colgroup>
            <col />
            <col width='61' />
            <col width='66' />
            <col width='66' />
            <col width='56' />
          </colgroup>
          <thead>
            <tr>
              <th>Located 3458</th>
              <th>Count *</th>
              <th>Count %</th>
              <th>Weight *</th>
              <th>Weight %</th>
            </tr>
          </thead>
          <tbody>
            {keywords.map((row) => (
              <KeywordRow key={row[0]} $selected={row[0] === 'category'}>
                {row.map((cell, i) => (
                  <td key={i}>{cell}</td>
                ))}
              </KeywordRow>
            ))}
          </tbody>
        </KeywordTable>
      </Viewport>
      <ScrollBar vertical offset='1px' size='17px' />
      <ScrollBar offset='2px' size='393px' />
    </ListFrame>
    <ChartTitle>Experimental visual representation</ChartTitle>
    <StripChart viewBox='0 0 1541 40' preserveAspectRatio='none'>
      {strips.map((strip) => (
        <rect key={strip.x} x={strip.x} y='0' width={strip.width} height='40' fill={strip.fill} shapeRendering='crispEdges' />
      ))}
    </StripChart>
    <BottomGrid>
      <BottomColumn>
        <BarLabel as='h2'>Raw text input</BarLabel>
        <ListFrame>
          <Viewport>
            <TextBox aria-label='Raw text input' defaultValue={rawText} spellCheck={false} />
          </Viewport>
          <ScrollBar vertical offset='1px' size='17px' />
          <ScrollBar offset='1px' size='17px' />
        </ListFrame>
        <Summary>@ 103396 characters. Text percentage: 16.88%</Summary>
      </BottomColumn>
      <BottomColumn>
        <BarTitle>Keyword list output</BarTitle>
        <DelimiterRow>
          <ActionButton $height='28px'>, (comma)</ActionButton>
          <ActionButton $height='28px'>\s (space)</ActionButton>
          <ActionButton $height='28px' $pressed>\n (newline)</ActionButton>
        </DelimiterRow>
        <ListFrame>
          <Viewport>
            <TextBox aria-label='Keyword list output' defaultValue={keywordText} spellCheck={false} />
          </Viewport>
          <ScrollBar vertical offset='1px' size='17px' />
          <ScrollBar muted />
        </ListFrame>
        <TabRow $height='20px'>
          <Tab $active $width='45px'>*</Tab>
          {['45', '80', '200', '250'].map((label) => (
            <Tab key={label} $width='42px'>{label}</Tab>
          ))}
          <Tab $width='29px'>450</Tab>
          <TabArrows />
        </TabRow>
      </BottomColumn>
    </BottomGrid>
  </RightPanel>
)

const App = () => {
  return (
    <>
      <GlobalStyle />
      <Window>
        <TitleBar>
          <AppIcon />
          <Title>TechSEO360 1.0.0 - Update #13 (unregistered, 31 days left of trial) - new project</Title>
          <CaptionButton aria-label='Minimize'>
            <svg width='10' height='10'><path d='M0 5.500h10' stroke='#000' /></svg>
          </CaptionButton>
          <CaptionButton aria-label='Maximize'>
            <svg width='10' height='10'><path d='M.5 .5h9v9h-9z' stroke='#000' fill='none' /></svg>
          </CaptionButton>
          <CaptionButton aria-label='Close'>
            <svg width='10' height='10'><path d='M0 0l10 10M10 0L0 10' stroke='#000' /></svg>
          </CaptionButton>
        </TitleBar>
        <MenuBar>
          {['File', 'Edit', 'Table', 'View', 'Tools'].map((label) => (
            <MenuButton key={label}>{label}</MenuButton>
          ))}
          <MenuItem>
            <MenuButton $open>Options</MenuButton>
            <OptionsMenu />
          </MenuItem>
          <MenuButton>Help</MenuButton>
          <MenuButton>
            <FlagIcon />
            Lingua
          </MenuButton>
        </MenuBar>
        <ToolBar>
          <ToolGroup $width='150px'>
            <ToolButton aria-label='New'><NewIcon /></ToolButton>
            <ToolButton aria-label='Open'><FolderIcon arrow /></ToolButton>
            <ToolButton aria-label='Save'><SaveIcon /></ToolButton>
            <ToolSeparator />
            <ToolButton aria-label='Import'><DatabaseIcon /></ToolButton>
            <ToolButton aria-label='Export'><DatabaseIcon flip /></ToolButton>
            <ToolButton aria-label='Print'><PrinterIcon /></ToolButton>
          </ToolGroup>
          <ToolGroup $width='525px'>
            <ToolButton aria-label='Cut'><CutIcon /></ToolButton>
            <ToolButton aria-label='Copy'><CopyIcon /></ToolButton>
            <Spacer />
            <ToolButton $width='76px'>easy mode</ToolButton>
            <ToolButton aria-label='Back'><RoundArrowIcon back /></ToolButton>
            <ToolButton aria-label='Forward'><RoundArrowIcon /></ToolButton>
            <ToolButton aria-label='Refresh'><RefreshIcon /></ToolButton>
          </ToolGroup>
          <ToolGroup $width='126px'>
            <ToolButton aria-label='Buy'><CartIcon /></ToolButton>
            <ToolButton aria-label='Register'><KeyIcon /></ToolButton>
            <ToolSeparator />
            <ToolButton aria-label='Home page'><HomeIcon /></ToolButton>
            <ToolButton aria-label='Share'><ShareIcon /></ToolButton>
            <ToolButton aria-label='Help'><HelpIcon /></ToolButton>
          </ToolGroup>
        </ToolBar>
        <TabRow $pad='1px' $height='22px'>
          <Tab $active $width='176px'>
            <SearchGlobeIcon />
            On-page keyword analysis
          </Tab>
          <Tab $width='129px' $pad='4px' aria-label='Lists'>
            <ListIcon />
          </Tab>
          <Tab $width='333px' $pad='237px'>Create robots.txt</Tab>
          <Tab $width='82px'>
            <ListIcon />
            View files
          </Tab>
          <Tab $width='97px'>
            <UploadIcon />
            Upload files
          </Tab>
          <Tab $width='102px'>
            <BoltIcon />
            Ping sitemap
          </Tab>
          <Tab $width='116px'>
            <GearsIcon />
            General options
          </Tab>
          <TabArrows />
        </TabRow>
        <Page>
          <AddressGrid>
            <AddressField id='address' label='Type or select address / URL' value='http://www.softpedia.com/' />
            <AddressField id='phrase' label='Type or select phrase / keyword' value='' />
            <AddressField id='agent' label='Type or select "browser" user agent' value='http://www.softpedia.com/' />
          </AddressGrid>
          <Panels>
            <LinksPanel />
            <ToolsColumn />
            <KeywordPanel />
          </Panels>
        </Page>
        <StatusBar>
          <StatusCell $width='100px' />
          <StatusCell $width='132px'>
            <svg width='14' height='14' aria-hidden='true'>
              <path d='M9 2h2v2H9zM5 6h2v2H5zM9 6h2v2H9zM1 10h2v2H1zM5 10h2v2H5zM9 10h2v2H9z' fill='#bfbfbf' />
            </svg>
          </StatusCell>
        </StatusBar>
      </Window>
    </>
  )
}

export default App
